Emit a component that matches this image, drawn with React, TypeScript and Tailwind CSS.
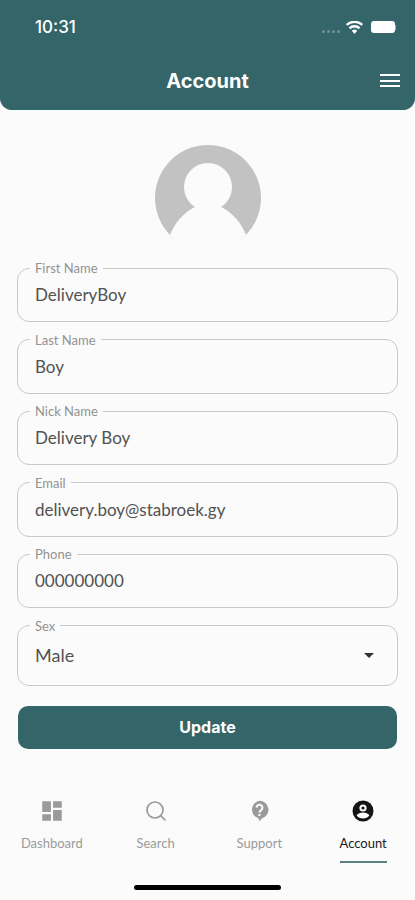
import React from 'react';
import { MdDashboard, MdArrowDropDown } from 'react-icons/md';
import { Search } from 'lucide-react';

const fields = [
  { label: 'First Name', value: 'DeliveryBoy' },
  { label: 'Last Name', value: 'Boy' },
  { label: 'Nick Name', value: 'Delivery Boy' },
  { label: 'Email', value: 'delivery.boy@stabroek.gy' },
  { label: 'Phone', value: '000000000' },
];

const Field: React.FC<{ label: string; value: string }> = ({ label, value }) => (
  <fieldset className="h-[61px] rounded-[12px] border-[1.5px] border-[#c9c9c9] pl-[12px] pr-4">
    <legend className="h-[14px] px-[5px] text-[13px] leading-[14px] text-[#929292]">{label}</legend>
    <div className="text-[17px] leading-[20px] text-[#525252] pt-[10px] pl-[5px]">{value}</div>
  </fieldset>
);

const SupportIcon = () => (
  <svg width="19" height="22" viewBox="0 0 22 26">
    <path d="M11 1a10.5 10.5 0 0 1 3 20.6L11 25l-1.5-3.6A10.5 10.5 0 0 1 11 1z" fill="#9a9a9a" />
    <path d="M7.5 9a3.5 3.5 0 1 1 5.4 3c-1.3.9-1.9 1.4-1.9 2.8" fill="none" stroke="#fbfbfb" strokeWidth="2.4" />
    <circle cx="11" cy="17.6" r="1.4" fill="#fbfbfb" />
  </svg>
);

const AccountIcon = () => (
  <svg width="22" height="22" viewBox="0 0 22 22">
    <circle cx="11" cy="11" r="10.5" fill="#141414" />
    <circle cx="11" cy="8" r="3.6" fill="#fbfbfb" />
    <circle cx="11" cy="8" r="1.6" fill="#141414" />
    <path d="M4.6 15.4c1.4-2.2 3.8-3 6.4-3s5 .8 6.4 3c-1.5 1.9-3.8 3-6.4 3s-4.9-1.1-6.4-3z" fill="#fbfbfb" />
  </svg>
);

const App: React.FC = () => {
  return (
    <div className="w-[415px] h-[900px] overflow-hidden bg-[#fbfbfb] flex flex-col font-['Lato',sans-serif]">
      <header className="h-[110px] shrink-0 bg-[#336569] rounded-b-[12px] border-b border-[#2a6a6e] text-white">
        <div className="h-[54px] flex items-center justify-between pl-[35px] pr-[19px]">
          <span className="font-['Inter',sans-serif] text-[17px] font-medium mt-[1px]">10:31</span>
          <div className="flex items-center">
            <div className="flex gap-[2px] mt-[8px] mr-[6px]">
              <span className="w-[3px] h-[3px] rounded-full bg-white/30" />
              <span className="w-[3px] h-[3px] rounded-full bg-white/30" />
              <span className="w-[3px] h-[3px] rounded-full bg-white/30" />
              <span className="w-[3px] h-[3px] rounded-full bg-white/30" />
            </div>
            <svg width="17" height="13" viewBox="0 0 17 13" className="mr-[8px]">
              <path d="M8.5 13 5.8 9.8a4 4 0 0 1 5.4 0zM4.3 8.2 2.7 6.3a8.6 8.6 0 0 1 11.6 0l-1.6 1.9a6.2 6.2 0 0 0-8.4 0zM1.3 4.7 0 3a12.6 12.6 0 0 1 17 0l-1.3 1.7a10.6 10.6 0 0 0-14.4 0z" fill="#fff" />
            </svg>
            <div className="flex items-center">
              <div className="w-[24px] h-[12px] rounded-[3px] bg-white" />
              <div className="w-[1px] h-[5px] bg-white/50" />
            </div>
          </div>
        </div>
        <div className="relative flex items-center justify-center h-[54px]">
          <h1 className="font-['Inter',sans-serif] text-[20px] font-bold">Account</h1>
          <div className="absolute right-[15px] top-[20px] w-[20px] flex flex-col gap-[3.5px]">
            <span className="h-[2px] bg-white" />
            <span className="h-[2px] bg-white" />
            <span className="h-[2px] bg-white" />
          </div>
        </div>
      </header>

      <div className="flex justify-center pt-[35px]">
        <svg width="106" height="106" viewBox="0 0 106 106">
          <circle cx="53" cy="53" r="53" fill="#c2c2c2" />
          <circle cx="53" cy="42" r="24" fill="#fbfbfb" />
          <path d="M15 90C22 72 38 59 53 59s31 13 38 31c-11 12-25 20-38 20s-27-8-38-20z" fill="#fbfbfb" />
        </svg>
      </div>

      <div className="flex flex-col gap-[10.6px] px-[17px] pt-[10px]">
        {fields.map((field) => (
          <Field key={field.label} label={field.label} value={field.value} />
        ))}
        <fieldset className="h-[67px] rounded-[12px] border-[1.5px] border-[#c9c9c9] pl-[12px] pr-[18px]">
          <legend className="h-[14px] px-[5px] text-[13px] leading-[14px] text-[#929292]">Sex</legend>
          <div className="flex items-center justify-between pt-[10px] pl-[5px] text-[18px] leading-[20px] text-[#525252]">
            <span>Male</span>
            <MdArrowDropDown size={24} color="#333" className="-mr-[2px]" />
          </div>
        </fieldset>
        <button className="mt-[9px] mx-[1px] h-[43px] rounded-[10px] bg-[#336569] text-white font-['Inter',sans-serif] text-[16px] font-bold">
          Update
        </button>
      </div>

      <nav className="mt-auto grid grid-cols-4 pb-[8px] text-[13px] text-[#9a9a9a]">
        <div className="flex flex-col items-center">
          <div className="h-[26px] flex items-center"><MdDashboard size={26} /></div>
          <span className="mt-[10px]">Dashboard</span>
        </div>
        <div className="flex flex-col items-center">
          <div className="h-[26px] flex items-center"><Search size={24} strokeWidth={1.7} /></div>
          <span className="mt-[10px]">Search</span>
        </div>
        <div className="flex flex-col items-center">
          <div className="h-[26px] flex items-center"><SupportIcon /></div>
          <span className="mt-[10px]">Support</span>
        </div>
        <div className="flex flex-col items-center text-[#1a1a1a]">
          <div className="h-[26px] flex items-center"><AccountIcon /></div>
          <span className="mt-[10px] border-b-2 border-[#5a8084] pb-[8px]">Account</span>
        </div>
      </nav>
      <div className="flex justify-center pb-[10px] pt-[14px]">
        <div className="w-[147px] h-[5px] rounded-full bg-black" />
      </div>
    </div>
  );
};

export default App;
